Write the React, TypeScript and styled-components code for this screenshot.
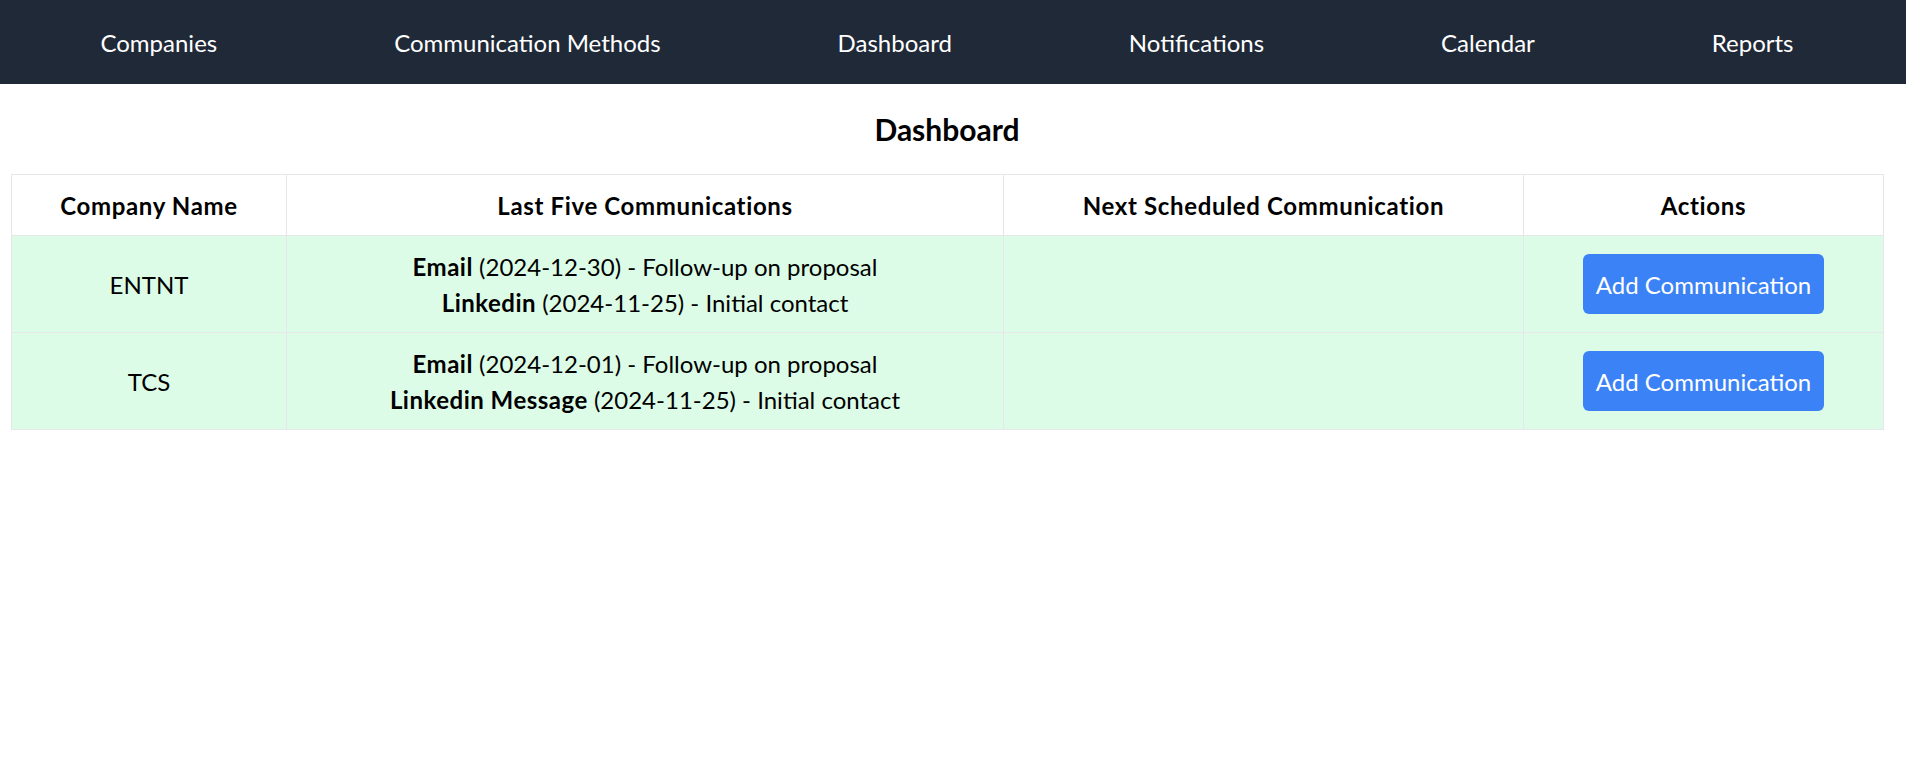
import React from "react";
import styled, { createGlobalStyle } from "styled-components";

const GlobalStyle = createGlobalStyle`
  * { box-sizing: border-box; }
  html, body { margin: 0; padding: 0; background: #ffffff; }
  body {
    font-family: Lato, "Noto Sans", "Open Sans", sans-serif;
    color: #000000;
  }
`;

const NavBar = styled.nav`
  height: 84px;
  background: #1f2937;
  display: flex;
  align-items: center;
  justify-content: space-around;
  padding: 1px 24px 0 12px;
`;

const NavLink = styled.a`
  color: #ffffff;
  font-size: 24px;
  line-height: 36px;
  text-decoration: none;
  cursor: pointer;
`;

const Main = styled.main`
  padding: 24px 23px 24px 11px;
`;

const Title = styled.h1`
  margin: 0 0 24px;
  font-size: 30px;
  line-height: 42px;
  font-weight: 700;
  text-align: center;
`;

const Table = styled.table`
  width: 100%;
  border-collapse: collapse;
  table-layout: fixed;
  border: 1px solid #e5e7eb;
`;

const Col = styled.col<{ $w: number }>`
  width: ${(p) => p.$w}px;
`;

const HeadCell = styled.th`
  border: 1px solid #e5e7eb;
  padding: 13px 12px 11px;
  font-size: 24px;
  line-height: 36px;
  font-weight: 700;
  letter-spacing: 0.65px;
  text-align: center;
  background: #ffffff;
`;

const BodyRow = styled.tr`
  background: #dcfce7;
`;

const Cell = styled.td`
  border: 1px solid #e5e7eb;
  padding: 13px 12px 11px;
  font-size: 24px;
  line-height: 36px;
  text-align: center;
  vertical-align: middle;
`;

const ActionCell = styled(Cell)`
  padding: 12px;
`;

const CommLine = styled.div`
  white-space: nowrap;
`;

const Method = styled.strong`
  font-weight: 700;
  letter-spacing: 0.5px;
`;

const AddButton = styled.button`
  font-family: inherit;
  font-size: 24px;
  line-height: 36px;
  padding: 13px 13px 11px;
  border: none;
  border-radius: 6px;
  background: #3b82f6;
  color: #ffffff;
  cursor: pointer;
`;

type Comm = { method: string; date: string; notes: string };
type Company = { name: string; comms: Comm[]; next: string };

const companies: Company[] = [
  {
    name: "ENTNT",
    comms: [
      { method: "Email", date: "2024-12-30", notes: "Follow-up on proposal" },
      { method: "Linkedin", date: "2024-11-25", notes: "Initial contact" },
    ],
    next: "",
  },
  {
    name: "TCS",
    comms: [
      { method: "Email", date: "2024-12-01", notes: "Follow-up on proposal" },
      { method: "Linkedin Message", date: "2024-11-25", notes: "Initial contact" },
    ],
    next: "",
  },
];

const navItems = [
  "Companies",
  "Communication Methods",
  "Dashboard",
  "Notifications",
  "Calendar",
  "Reports",
];

export default function App() {
  return (
    <>
      <GlobalStyle />
      <NavBar>
        {navItems.map((n) => (
          <NavLink key={n}>{n}</NavLink>
        ))}
      </NavBar>
      <Main>
        <Title>Dashboard</Title>
        <Table>
          <colgroup>
            <Col $w={275} />
            <Col $w={717} />
            <Col $w={520} />
            <Col $w={360} />
          </colgroup>
          <thead>
            <tr>
              <HeadCell>Company Name</HeadCell>
              <HeadCell>Last Five Communications</HeadCell>
              <HeadCell>Next Scheduled Communication</HeadCell>
              <HeadCell>Actions</HeadCell>
            </tr>
          </thead>
          <tbody>
            {companies.map((c) => (
              <BodyRow key={c.name}>
                <Cell>{c.name}</Cell>
                <Cell>
                  {c.comms.map((m, i) => (
                    <CommLine key={i}>
                      <Method>{m.method}</Method> ({m.date}) - {m.notes}
                    </CommLine>
                  ))}
                </Cell>
                <Cell>{c.next}</Cell>
                <ActionCell>
                  <AddButton>Add Communication</AddButton>
                </ActionCell>
              </BodyRow>
            ))}
          </tbody>
        </Table>
      </Main>
    </>
  );
}
